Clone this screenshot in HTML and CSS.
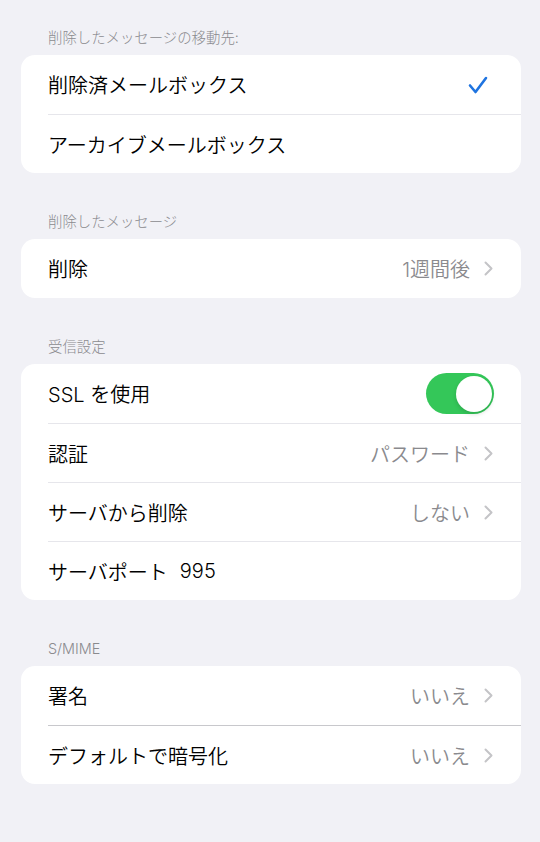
FILE: index.html
```html
<!DOCTYPE html>
<html lang="ja">

<head>
    <meta charset="UTF-8">
    <meta name="viewport" content="width=device-width, initial-scale=1.0">
    <title>アカウント詳細</title>
    <link rel="stylesheet" href="styles.css">
</head>

<body>
    <div class="section">
        <h2 class="section-title">削除したメッセージの移動先:</h2>
        <div class="card">
            <div class="row">
                <span class="label">削除済メールボックス</span>
                <svg class="check" width="20" height="18" viewBox="0 0 20 18">
                    <path d="M2 9.5 L7.5 16 L18 2" fill="none" stroke="#1f74e0" stroke-width="2.6" stroke-linecap="round" stroke-linejoin="round" />
                </svg>
            </div>
            <div class="row">
                <span class="label">アーカイブメールボックス</span>
            </div>
        </div>
    </div>

    <div class="section">
        <h2 class="section-title">削除したメッセージ</h2>
        <div class="card">
            <div class="row">
                <span class="label">削除</span>
                <span class="value">1週間後</span>
                <svg class="chevron" width="9" height="15" viewBox="0 0 9 15">
                    <path d="M1.5 1.5 L7.5 7.5 L1.5 13.5" fill="none" stroke="#c4c4c7" stroke-width="2" stroke-linecap="round" stroke-linejoin="round" />
                </svg>
            </div>
        </div>
    </div>

    <div class="section">
        <h2 class="section-title">受信設定</h2>
        <div class="card">
            <div class="row">
                <span class="label">SSL を使用</span>
                <span class="toggle on"><span class="knob"></span></span>
            </div>
            <div class="row">
                <span class="label">認証</span>
                <span class="value">パスワード</span>
                <svg class="chevron" width="9" height="15" viewBox="0 0 9 15">
                    <path d="M1.5 1.5 L7.5 7.5 L1.5 13.5" fill="none" stroke="#c4c4c7" stroke-width="2" stroke-linecap="round" stroke-linejoin="round" />
                </svg>
            </div>
            <div class="row">
                <span class="label">サーバから削除</span>
                <span class="value">しない</span>
                <svg class="chevron" width="9" height="15" viewBox="0 0 9 15">
                    <path d="M1.5 1.5 L7.5 7.5 L1.5 13.5" fill="none" stroke="#c4c4c7" stroke-width="2" stroke-linecap="round" stroke-linejoin="round" />
                </svg>
            </div>
            <div class="row">
                <span class="label-fixed">サーバポート</span>
                <span class="port">995</span>
            </div>
        </div>
    </div>

    <div class="section">
        <h2 class="section-title">S/MIME</h2>
        <div class="card dark-lines">
            <div class="row">
                <span class="label">署名</span>
                <span class="value">いいえ</span>
                <svg class="chevron" width="9" height="15" viewBox="0 0 9 15">
                    <path d="M1.5 1.5 L7.5 7.5 L1.5 13.5" fill="none" stroke="#c4c4c7" stroke-width="2" stroke-linecap="round" stroke-linejoin="round" />
                </svg>
            </div>
            <div class="row">
                <span class="label">デフォルトで暗号化</span>
                <span class="value">いいえ</span>
                <svg class="chevron" width="9" height="15" viewBox="0 0 9 15">
                    <path d="M1.5 1.5 L7.5 7.5 L1.5 13.5" fill="none" stroke="#c4c4c7" stroke-width="2" stroke-linecap="round" stroke-linejoin="round" />
                </svg>
            </div>
        </div>
    </div>
</body>

</html>
```

FILE: styles.css
```css
/* Reset */
* {
    margin: 0;
    padding: 0;
    box-sizing: border-box;
}

body {
    font-family: "Inter", "Noto Sans CJK JP", sans-serif;
    font-weight: 350;
    background-color: #f1f1f6;
    color: #000;
    padding: 29px 19px 40px 21px;
}

/* Grouped sections */
.section {
    margin-bottom: 40px;
}

.section-title {
    font-size: 14.4px;
    font-weight: 300;
    line-height: 18px;
    color: #8a8a8e;
    padding-left: 27px;
    margin-bottom: 8px;
}

.card {
    background-color: #ffffff;
    border-radius: 14px;
    overflow: hidden;
}

.row {
    height: 59px;
    display: flex;
    align-items: center;
    margin-left: 27px;
    padding-right: 27px;
    border-top: 1px solid #e6e6eb;
}

.row:first-child {
    border-top: none;
}

.dark-lines .row {
    border-top-color: #c8c8cc;
}

.dark-lines .row:first-child {
    border-top: none;
}

.label {
    font-size: 20px;
    flex: 1;
}

.label-fixed {
    font-size: 20px;
}

.value {
    font-size: 20px;
    color: #8a8a8e;
    margin-right: 14px;
}

.port {
    font-size: 20px;
    flex: 1;
    margin-left: 12px;
}

.check {
    margin-right: 6px;
}

.chevron {
    margin-right: 1px;
}

/* Switch */
.toggle {
    width: 68px;
    height: 41px;
    border-radius: 21px;
    background-color: #e9e9eb;
    display: flex;
    align-items: center;
    padding: 2.5px;
}

.toggle.on {
    background-color: #34c759;
    justify-content: flex-end;
}

.knob {
    width: 36px;
    height: 36px;
    border-radius: 50%;
    background-color: #ffffff;
    box-shadow: 0 2px 4px rgba(0, 0, 0, 0.15);
}
```
